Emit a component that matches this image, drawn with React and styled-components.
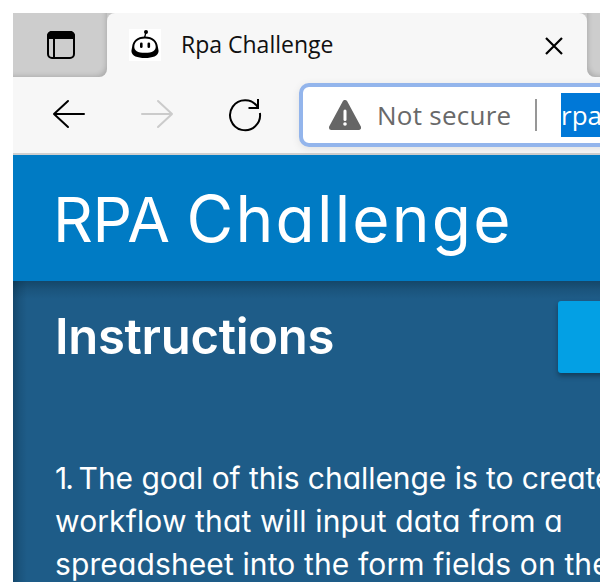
import React from "react";
import styled, { createGlobalStyle } from "styled-components";

const GlobalStyle = createGlobalStyle`
  * { box-sizing: border-box; }
  html, body { margin: 0; background: #fff; overflow: hidden; }
`;

const Page = styled.div`
  width: 600px;
  height: 582px;
  padding: 13px 0 0 13px;
  overflow: hidden;
  background: #fff;
  font-family: "Open Sans", "Noto Sans", sans-serif;
`;

const Browser = styled.div`
  display: flex;
  flex-direction: column;
  width: 587px;
  height: 569px;
  overflow: hidden;
  background: #f7f7f7;
`;

const TabStrip = styled.div`
  display: flex;
  flex: none;
  height: 64px;
`;

const TabActions = styled.div`
  width: 94px;
  flex: none;
  height: 64px;
  padding: 18px 0 0 34px;
  background: #cdcdcd;
  border-radius: 0 0 8px 0;
  box-shadow: inset -4px -4px 5px -3px rgba(0, 0, 0, 0.16);
`;

const TabSlot = styled.div`
  width: 480px;
  flex: none;
  background: linear-gradient(#c8c8c8 50%, #f7f7f7 50%);
`;

const Tab = styled.div`
  display: flex;
  align-items: center;
  height: 64px;
  padding: 0 23px 0 22px;
  background: #f7f7f7;
  border-radius: 8px 8px 0 0;
`;

const TabTitle = styled.div`
  flex: 1;
  margin: -2px 0 0 20px;
  font-size: 23px;
  line-height: 32px;
  color: #101010;
  white-space: nowrap;
`;

const NextTab = styled.div`
  width: 60px;
  flex: none;
  background: #cdcdcd;
  border-radius: 0 0 0 8px;
  box-shadow: inset 4px -4px 5px -3px rgba(0, 0, 0, 0.16);
`;

const Toolbar = styled.div`
  display: flex;
  flex: none;
  height: 78px;
  padding: 6px 0 0 39px;
  border-bottom: 2px solid #cfcfcf;
`;

const NavButtons = styled.div`
  display: flex;
  gap: 54px;
  width: 247px;
  flex: none;
  padding-top: 15px;
`;

const AddressBar = styled.div`
  display: flex;
  align-items: center;
  flex: none;
  width: 400px;
  height: 64px;
  padding-left: 26px;
  background: #fff;
  border: 4px solid #93b5ec;
  border-radius: 10px;
  box-shadow: 0 2px 8px rgba(0, 0, 0, 0.09);
`;

const Security = styled.div`
  width: 158px;
  margin-left: 16px;
  font-size: 26px;
  line-height: 44px;
  letter-spacing: 0.25px;
  color: #696969;
  white-space: nowrap;
`;

const Divider = styled.div`
  width: 2px;
  height: 32px;
  background: #979797;
`;

const SelectedUrl = styled.div`
  width: 100px;
  height: 44px;
  margin-left: 24px;
  background: #0078d7;
  color: #fff;
  font-size: 26px;
  line-height: 44px;
`;

const SiteHeader = styled.header`
  display: flex;
  align-items: center;
  flex: none;
  height: 126px;
  padding-left: 40px;
  background: #007bc4;
`;

const SiteTitle = styled.h1`
  margin: 2px 0 0;
  font: 400 62px/80px Inter, sans-serif;
  font-feature-settings: "cv11";
  color: #fff;
  white-space: nowrap;
`;

const Word = styled.span`
  font-size: ${(p) => p.$size || "inherit"};
  letter-spacing: ${(p) => p.$track};
`;

const Content = styled.main`
  flex: 1;
  padding: 20px 0 0 42px;
  background:
    linear-gradient(rgba(0, 30, 45, 0.34), rgba(0, 30, 45, 0.12) 9px, rgba(0, 30, 45, 0) 18px),
    linear-gradient(90deg, rgba(0, 30, 50, 0.32), rgba(0, 30, 50, 0.12) 7px, rgba(0, 30, 50, 0) 14px),
    #1e5c88;
  color: #fff;
`;

const ContentTop = styled.div`
  display: flex;
  width: 700px;
`;

const Heading = styled.h2`
  width: 503px;
  margin: 0;
  font: 600 49px/72px Inter, sans-serif;
  letter-spacing: -0.3px;
`;

const DownloadButton = styled.button`
  width: 180px;
  height: 72px;
  padding: 0;
  border: 0;
  border-radius: 3px;
  background: #03a0e4;
  box-shadow: 0 3px 5px rgba(0, 0, 0, 0.35);
`;

const Steps = styled.p`
  margin: 84px 0 0;
  font: 400 30px/43px Inter, sans-serif;
  font-feature-settings: "cv11";
`;

const Line = styled.span`
  display: block;
  white-space: nowrap;
  letter-spacing: ${(p) => p.$track};
`;

const Icon = styled.svg`
  display: block;
  flex: none;
`;

export default function App() {
  return (
    <>
      <GlobalStyle />
      <Page>
        <Browser>
          <TabStrip>
            <TabActions>
              <Icon width="28" height="28" viewBox="0 0 28 28">
                <rect x="1" y="1" width="26" height="26" rx="4" fill="none" stroke="#000" strokeWidth="2" />
                <path d="M0 8V5a5 5 0 0 1 5-5h18a5 5 0 0 1 5 5v3z" />
                <path d="M7 8v19" stroke="#000" strokeWidth="2" />
              </Icon>
            </TabActions>
            <TabSlot>
              <Tab>
                <Icon width="32" height="32" viewBox="0 0 32 32">
                  <path fill="#fff" d="M0 0h32v32H0z" />
                  <path d="M16 7.500C8 7.500 3.700 12 3.100 18L2.400 22c.3 5 6 7 13.600 7s13.300-2 13.600-7l-.7-4C28.300 12 24 7.500 16 7.500z" />
                  <path fill="#fff" d="M16 9.500c-6.400 0-10.500 3.200-10.700 7.900-.2 4.200 3.200 6.400 10.700 6.400s10.900-2.200 10.700-6.400C26.500 12.700 22.400 9.500 16 9.500z" />
                  <path d="M15.600 8.500 17 3" stroke="#000" strokeWidth="1.300" />
                  <circle cx="17" cy="3" r="2" />
                  <rect x="11" y="13.500" width="2.600" height="5.500" rx="1.300" />
                  <rect x="18.500" y="13.500" width="2.600" height="5.500" rx="1.300" />
                </Icon>
                <TabTitle>Rpa Challenge</TabTitle>
                <Icon width="20" height="20" viewBox="0 0 20 20" fill="none" stroke="#000" strokeWidth="2.200">
                  <path d="M2 3l16 16M18 3L2 19" />
                </Icon>
              </Tab>
            </TabSlot>
            <NextTab />
          </TabStrip>
          <Toolbar>
            <NavButtons>
              <Icon width="34" height="32" viewBox="0 0 34 32" fill="none" stroke="#000" strokeWidth="2" strokeLinecap="round" strokeLinejoin="round">
                <path d="M16 3 2 16l14 13M2 16h30" />
              </Icon>
              <Icon width="34" height="32" viewBox="0 0 34 32" fill="none" stroke="#cbcbcb" strokeWidth="2" strokeLinecap="round" strokeLinejoin="round">
                <path d="m18 3 14 13-14 13M32 16H2" />
              </Icon>
              <Icon width="34" height="36" viewBox="0 0 34 36" fill="none" stroke="#000" strokeWidth="2">
                <path d="M31.900 15A15 15 0 1 1 29.600 9M30 1v9h-9.500" />
              </Icon>
            </NavButtons>
            <AddressBar>
              <Icon width="32" height="30" viewBox="0 0 32 30">
                <path d="M16 2.500 29.500 27.500H2.500z" fill="#666" stroke="#666" strokeWidth="5" strokeLinejoin="round" />
                <path d="M16 11v8.500" stroke="#fff" strokeWidth="3" strokeLinecap="round" />
                <circle cx="16" cy="24" r="1.800" fill="#fff" />
              </Icon>
              <Security>Not secure</Security>
              <Divider />
              <SelectedUrl>rpa</SelectedUrl>
            </AddressBar>
          </Toolbar>
          <SiteHeader>
            <SiteTitle>
              <Word $track="-0.400px">RPA </Word>
              <Word $size="64px" $track="2.200px">Challenge</Word>
            </SiteTitle>
          </SiteHeader>
          <Content>
            <ContentTop>
              <Heading>Instructions</Heading>
              <DownloadButton />
            </ContentTop>
            <Steps>
              <Line $track="-0.050px">
                <Word $track="-1.900px">1. </Word>
                The goal of this challenge is to create
              </Line>
              <Line $track="0.120px">workflow that will input data from a</Line>
              <Line $track="0.120px">spreadsheet into the form fields on the</Line>
            </Steps>
          </Content>
        </Browser>
      </Page>
    </>
  );
}
